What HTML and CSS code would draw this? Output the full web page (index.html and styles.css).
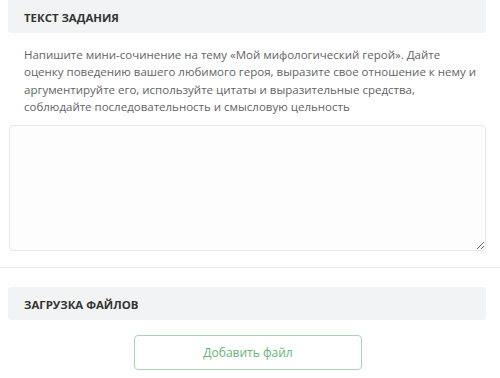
FILE: index.html
```html
<!DOCTYPE html>
<html lang="ru">
<head>
<meta charset="utf-8">
<link rel="stylesheet" href="styles.css">
</head>
<body>
<div class="page">
  <section class="block">
    <div class="head">ТЕКСТ ЗАДАНИЯ</div>
    <p class="task">Напишите мини-сочинение на тему «Мой мифологический герой». Дайте оценку поведению вашего любимого героя, выразите свое отношение к нему и аргументируйте его, используйте цитаты и выразительные средства, соблюдайте последовательность и смысловую цельность</p>
    <textarea class="answer"></textarea>
  </section>
  <hr class="divider">
  <section class="block">
    <div class="head">ЗАГРУЗКА ФАЙЛОВ</div>
    <div class="actions">
      <button class="add">Добавить файл</button>
    </div>
  </section>
</div>
</body>
</html>
```
FILE: styles.css
```css
html, body {
  margin: 0;
  padding: 0;
  background: #ffffff;
}
body {
  font-family: "Open Sans", "Noto Sans", sans-serif;
  width: 500px;
  height: 378px;
  overflow: hidden;
}
.page {
  display: flex;
  flex-direction: column;
}
.block {
  margin: 0 14px 0 8px;
  display: flex;
  flex-direction: column;
}
.head {
  background: #f1f3f4;
  height: 33px;
  line-height: 35px;
  padding-left: 16px;
  font-size: 11.4px;
  font-weight: 700;
  color: #333333;
  border-radius: 0 0 3px 3px;
}
.task {
  margin: 13px 0 0 16px;
  font-size: 11.5px;
  line-height: 17.3px;
  color: #606467;
  padding-right: 4px;
}
.answer {
  margin: 10px 0 0 1px;
  height: 126px;
  box-sizing: border-box;
  border: 1.5px solid #e6e7e8;
  border-radius: 4px;
  resize: vertical;
  background: #fdfdfd;
}
.divider {
  margin: 16px 0 0 0;
  border: 0;
  border-top: 1px solid #ececec;
  height: 0;
}
.divider + .block {
  margin-top: 19px;
}
.divider + .block .head {
  border-radius: 3px;
}
.actions {
  display: flex;
  padding-left: 126px;
  margin-top: 15px;
}
.add {
  width: 228px;
  height: 35px;
  box-sizing: border-box;
  border: 1.5px solid #a7d5b3;
  border-radius: 4px;
  background: #ffffff;
  color: #5fb67a;
  font-family: "Open Sans", "Noto Sans", sans-serif;
  font-size: 12px;
}
```
